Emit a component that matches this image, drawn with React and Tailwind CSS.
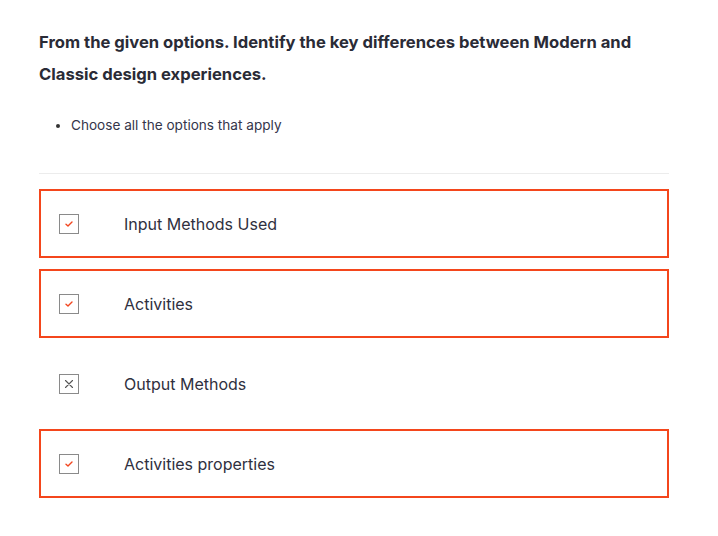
const options = [
  { label: 'Input Methods Used', selected: true },
  { label: 'Activities', selected: true },
  { label: 'Output Methods', selected: false },
  { label: 'Activities properties', selected: true },
];

function CheckMark() {
  return (
    <svg width="10" height="10" viewBox="0 0 10 10" fill="none">
      <path d="M2 5.2l2 1.8 4-4" stroke="#f2461f" strokeWidth="1.4" strokeLinecap="round" strokeLinejoin="round" />
    </svg>
  );
}

function CrossMark() {
  return (
    <svg width="10" height="10" viewBox="0 0 10 10" fill="none">
      <path d="M1.5 1.5l7 7M8.5 1.5l-7 7" stroke="#555" strokeWidth="1.1" strokeLinecap="round" />
    </svg>
  );
}

function Option({ label, selected }) {
  return (
    <div
      className={
        'flex items-center h-[69px] pl-[18px] ' +
        (selected ? 'border-2 border-[#f4461c]' : 'border-2 border-transparent')
      }
    >
      <div className="w-5 h-5 border border-[#8a8a8a] flex items-center justify-center shrink-0">
        {selected ? <CheckMark /> : <CrossMark />}
      </div>
      <span className="ml-[45px] text-[16px] text-[#2f3040]">{label}</span>
    </div>
  );
}

export default function App() {
  return (
    <div className="bg-white min-h-[536px] w-[718px] pl-[39px] pt-[26px]" style={{ fontFamily: 'Inter, "Noto Sans", sans-serif' }}>
      <div className="w-[630px]">
        <h2 className="text-[16.6px] font-bold leading-[32px] text-[#2a2b36]">
          From the given options. Identify the key differences between Modern and Classic design experiences.
        </h2>
        <ul className="mt-[25px] pl-[32px] list-disc text-[13.6px] leading-[20px] text-[#34354a] marker:text-[#333]">
          <li>Choose all the options that apply</li>
        </ul>
        <div className="mt-[38px] border-t border-[#ececec]" />
        <div className="mt-[15px] flex flex-col gap-[11px]">
          {options.map(o => (
            <Option key={o.label} label={o.label} selected={o.selected} />
          ))}
        </div>
      </div>
    </div>
  );
}
